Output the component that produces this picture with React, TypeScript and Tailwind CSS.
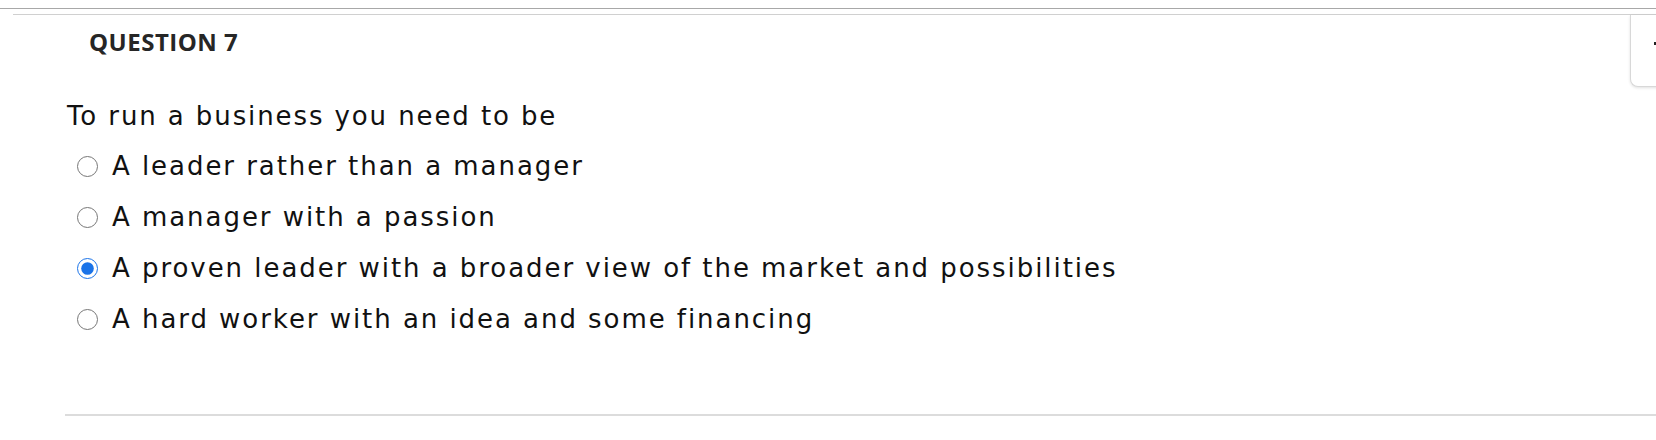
import { useState } from "react";

const options = [
	"A leader rather than a manager",
	"A manager with a passion",
	"A proven leader with a broader view of the market and possibilities",
	"A hard worker with an idea and some financing",
];

export default function App() {
	const [selected, setSelected] = useState(2);

	return (
		<div className="relative w-[1656px] h-[440px] overflow-hidden bg-white text-[#111]">
			<div className="h-[9px] border-b border-[#a8a8a8]" />
			<div className="mt-[5px] ml-[13px] border-t border-[#d0d0d0]">
				<div className="pl-[52px]">
					<h2
						className="pl-[24px] pt-[12px] text-[24px] font-bold leading-[30px] tracking-[0.5px] text-[#262626]"
						style={{ fontFamily: '"Open Sans", sans-serif' }}
					>
						QUESTION 7
					</h2>
					<div
						className="mt-[34px] pb-[69px] border-b-2 border-[#dcdcdc]"
						style={{ fontFamily: '"DejaVu Sans", sans-serif' }}
					>
						<p className="pl-[2px] text-[26px] leading-[50px] tracking-[1.9px]">
							To run a business you need to be
						</p>
						<div className="flex flex-col">
							{options.map((opt, i) => (
								<label
									key={opt}
									className="flex items-center h-[51px] text-[26px] tracking-[1.95px] cursor-pointer"
								>
									<input
										type="radio"
										name="q7"
										checked={selected === i}
										onChange={() => setSelected(i)}
										className="ml-[12px] mr-[14px] w-[21px] h-[21px] accent-[#1a73e8]"
									/>
									<span>{opt}</span>
								</label>
							))}
						</div>
					</div>
				</div>
			</div>
			{/* floating side tab on the right */}
			<div className="absolute left-[1630px] top-[15px] w-[60px] h-[72px] rounded-bl-lg border-l border-b border-[#d8d8d8] shadow-[0_1px_3px_rgba(0,0,0,0.12)] bg-white">
				<div className="absolute left-[23px] top-[27px] w-[3px] h-[3px] bg-[#222]" />
			</div>
		</div>
	);
}
